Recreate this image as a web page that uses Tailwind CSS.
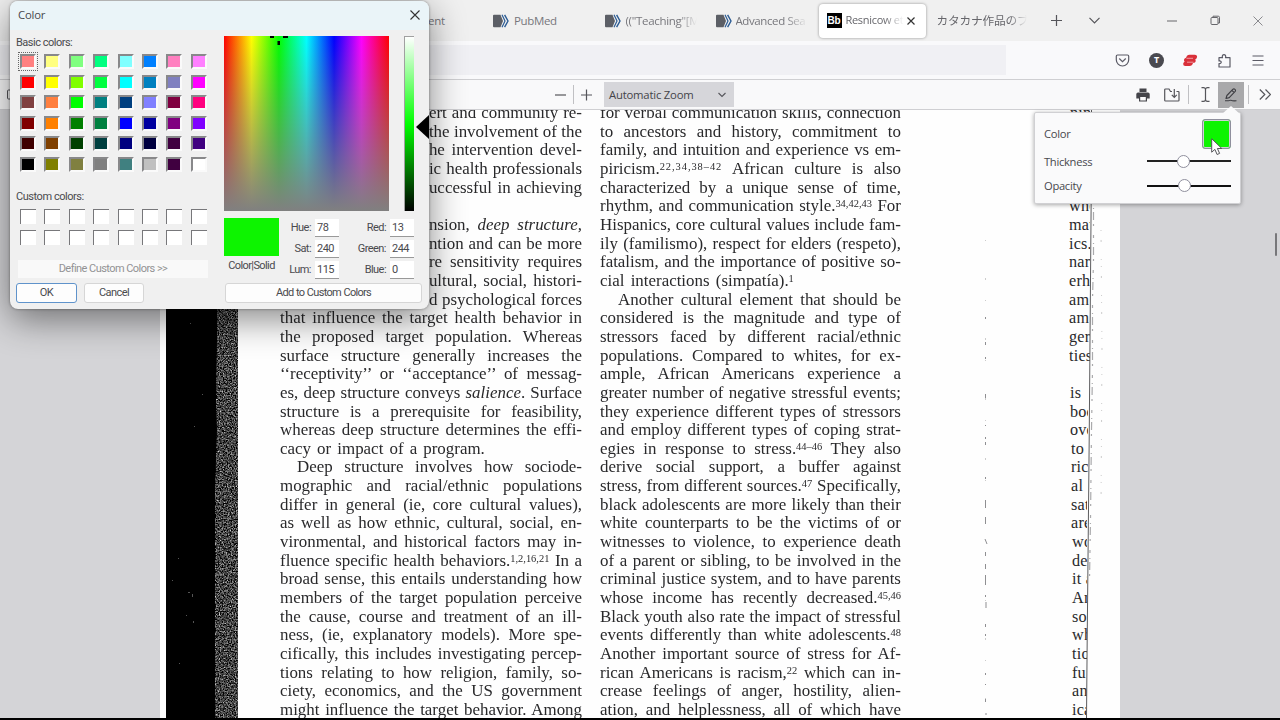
<!DOCTYPE html>
<html lang="en">
<head>
<meta charset="utf-8">
<title>PDF viewer with color picker</title>
<script src="https://cdn.jsdelivr.net/npm/@tailwindcss/browser@4"></script>
</head>
<body class="relative flex h-[720px] w-[1280px] flex-col overflow-hidden bg-black font-['Open_Sans','Noto_Sans_CJK_JP',sans-serif] text-[11.500px] tracking-[-0.200px] text-[#55555a]">

<!-- Tab strip -->
<header class="flex h-[41px] shrink-0 items-center bg-[#f0f0f0] pl-[428px]">
  <div class="w-[65px] text-[#77777c]">ent</div>
  <div class="flex w-[111.5px] items-center gap-[5px] text-[#77777c]">
    <svg class="h-[14px] w-[16px]" viewBox="0 0 16 14"><path d="M1 .8h6.500L10 7l-2.500 6.200H1a1 1 0 0 1-1-1V1.800a1 1 0 0 1 1-1z" fill="#5c5f66"/><path d="M9 .8 12 7 9 13.200" fill="none" stroke="#2c5c94" stroke-width="1.200"/><path d="M11.600.8 15 7l-3.400 6.200" fill="none" stroke="#2c5c94" stroke-width="1.400"/></svg>
    <span class="tracking-[-0.350px]">PubMed</span>
  </div>
  <div class="flex w-[111px] items-center gap-[5px] text-[#77777c]">
    <svg class="h-[14px] w-[16px]" viewBox="0 0 16 14"><path d="M1 .8h6.500L10 7l-2.500 6.200H1a1 1 0 0 1-1-1V1.800a1 1 0 0 1 1-1z" fill="#5c5f66"/><path d="M9 .8 12 7 9 13.200" fill="none" stroke="#2c5c94" stroke-width="1.200"/><path d="M11.600.8 15 7l-3.400 6.200" fill="none" stroke="#2c5c94" stroke-width="1.400"/></svg>
    <span class="w-[71px] overflow-hidden tracking-[-0.300px] whitespace-nowrap [mask-image:linear-gradient(90deg,#000_75%,transparent)]">(("Teaching"[M</span>
  </div>
  <div class="flex w-[103px] items-center gap-[4px] text-[#77777c]">
    <svg class="h-[14px] w-[16px]" viewBox="0 0 16 14"><path d="M1 .8h6.500L10 7l-2.500 6.200H1a1 1 0 0 1-1-1V1.800a1 1 0 0 1 1-1z" fill="#5c5f66"/><path d="M9 .8 12 7 9 13.200" fill="none" stroke="#2c5c94" stroke-width="1.200"/><path d="M11.600.8 15 7l-3.400 6.200" fill="none" stroke="#2c5c94" stroke-width="1.400"/></svg>
    <span class="w-[72px] overflow-hidden tracking-[-0.400px] whitespace-nowrap [mask-image:linear-gradient(90deg,#000_68%,transparent)]">Advanced Sea</span>
  </div>
  <div class="flex h-[34px] w-[107px] items-center rounded-[4px] bg-white pl-[8px] shadow-[0_0_3px_rgba(0,0,0,0.4)]">
    <span class="flex h-[15px] w-[15px] items-center justify-center bg-black font-['Liberation_Sans',sans-serif] text-[10px] font-bold text-white">Bb</span>
    <span class="ml-[4px] w-[58px] overflow-hidden text-[11px] tracking-[-0.300px] whitespace-nowrap text-[#66666b] [mask-image:linear-gradient(90deg,#000_65%,transparent)]">Resnicow et</span>
    <svg class="ml-[3px] size-[8px]" viewBox="0 0 8 8"><path d="m.5.5 7 7m0-7-7 7" stroke="#333" stroke-width="1.200"/></svg>
  </div>
  <div class="ml-[11px] w-[90px] overflow-hidden text-[11.700px] tracking-[-0.200px] whitespace-nowrap text-[#66666b] [mask-image:linear-gradient(90deg,#000_80%,transparent)]">カタカナ作品のブ</div>
  <svg class="ml-[24px] size-[11px]" viewBox="0 0 11 11"><path d="M5.500 0v11M0 5.500h11" stroke="#55555a" stroke-width="1.200"/></svg>
  <svg class="ml-[27px] h-[7px] w-[11px]" viewBox="0 0 11 7"><path d="m.5.8 5 5 5-5" fill="none" stroke="#55555a" stroke-width="1.200"/></svg>
  <svg class="ml-[67px] h-[10px] w-[10px]" viewBox="0 0 10 10"><path d="M0 5h10" stroke="#66666b"/></svg>
  <svg class="ml-[33px] size-[11px]" viewBox="0 0 11 11" fill="none" stroke="#66666b"><rect x="1" y="2.500" width="7" height="7" rx="1"/><path d="M3 2.500V1.200h5.300a1.200 1.200 0 0 1 1.200 1.200V8H8"/></svg>
  <svg class="ml-[32px] size-[10px]" viewBox="0 0 10 10"><path d="m.5.5 9 9m0-9-9 9" stroke="#8a8a8e"/></svg>
</header>

<!-- Address bar row -->
<nav class="flex h-[38px] shrink-0 items-center bg-[#f9f9fb]">
  <div class="h-[30px] w-[1006px] bg-[#f0f0f4]"></div>
  <svg class="ml-[109px] size-[15px]" viewBox="0 0 15 15" fill="none" stroke="#5b5b66" stroke-width="1.200"><path d="M2.500 2h10a1.200 1.200 0 0 1 1.200 1.200v3.600a6.200 6.200 0 0 1-12.400 0V3.200A1.200 1.200 0 0 1 2.500 2z"/><path d="m4.500 5.800 3 2.800 3-2.800" stroke-linecap="round"/></svg>
  <span class="ml-[19px] flex size-[15px] items-center justify-center rounded-full bg-[#4a4a50] text-[9px] font-bold text-white">T</span>
  <svg class="ml-[18px] h-[13px] w-[16px]" viewBox="0 0 16 13"><path d="M5 1.800Q6 .7 7.500.7h5.200Q15.500.9 15 3.300 14.500 5.200 13.200 5.400 14.200 6.500 13.400 8 12.600 9 11 9 10.300 12 7.500 12H3Q.8 11.700 1.200 9.500 1.500 8.200 2.600 7.700 1.500 6.500 2.200 5 3 4 4 3.800z" fill="#d9303a"/><path d="M4.500 4.300h6.500M5 8.200h6.500" stroke="#f3b6ba" stroke-width=".8"/></svg>
  <svg class="ml-[19px] size-[15px]" viewBox="0 0 15 15" fill="none" stroke="#5b5b66" stroke-width="1.200" stroke-linejoin="round"><path d="M2 14V10.500c2.800.7 3.200-3.200 0-2.500V4.700h3.500c-1.400-4.200 4.400-4.200 3 0h4.500V14z"/></svg>
  <svg class="ml-[20px] h-[11px] w-[12px]" viewBox="0 0 12 11"><path d="M.5 1h11M.5 5.500h11M.5 10h11" stroke="#5b5b66" stroke-width="1.200"/></svg>
</nav>

<!-- Viewer toolbar -->
<div class="relative flex h-[31px] shrink-0 items-center border-y border-[#cfcfd2] bg-[#f9f9fa] pl-[6px]">
  <svg class="h-[11px] w-[10px]" viewBox="0 0 10 11" fill="none" stroke="#55555a"><rect x="1.500" y="1" width="10" height="9" rx="1"/></svg>
  <svg class="ml-[539px] h-[12px] w-[11px]" viewBox="0 0 11 12"><path d="M0 6h11" stroke="#55555a" stroke-width="1.200"/></svg>
  <div class="mx-[7px] h-[19px] w-px bg-[#c0c0c3]"></div>
  <svg class="h-[12px] w-[11px]" viewBox="0 0 11 12"><path d="M0 6h11M5.500.5v11" stroke="#55555a" stroke-width="1.200"/></svg>
  <div class="ml-[12px] flex h-[25px] w-[130px] items-center justify-between bg-[#d6d6da] pt-px pr-[8px] pl-[5px] text-[11.300px] text-[#444449]">
    <span>Automatic Zoom</span>
    <svg class="h-[6px] w-[8px]" viewBox="0 0 8 6"><path d="m.5 1 3.500 3.500L7.500 1" fill="none" stroke="#55555a" stroke-width="1.100"/></svg>
  </div>
  <svg class="ml-[402px] size-[14px]" viewBox="0 0 14 14"><path d="M3.500.5h7V4h-7zM2 4.500h10A1.700 1.700 0 0 1 13.700 6v4.500H11V8.500H3v2H.3V6A1.700 1.700 0 0 1 2 4.500z" fill="#444449"/><path d="M3.600 8.500h6.800V13H3.600z" fill="#f9f9fa" stroke="#444449" stroke-width="1.200"/></svg>
  <svg class="ml-[14px] h-[14px] w-[16px]" viewBox="0 0 16 14" fill="none" stroke="#55555a" stroke-width="1.200"><path d="M8 3.500H6.500L5 1H1.500C1 1 .7 1.300.7 1.800v10.400c0 .5.300.8.800.8h12.700c.5 0 .8-.3.800-.8V4.300c0-.5-.3-.8-.8-.8h-1.700"/><path d="M10.300 1v8M7.800 6.800l2.500 2.500 2.500-2.500"/></svg>
  <div class="ml-[8px] h-[19px] w-px bg-[#c0c0c3]"></div>
  <svg class="ml-[12px] h-[15px] w-[9px]" viewBox="0 0 9 15"><path d="M.5.700h2C3.700.7 4.500 1.300 4.500 2.500v10c0 1.200-.8 1.800-2 1.800h-2M8.500.700h-2c-1.200 0-2 .6-2 1.800v10c0 1.200.8 1.800 2 1.800h2" fill="none" stroke="#55555a" stroke-width="1.200"/></svg>
  <div class="ml-[8px] flex h-[26px] w-[26px] items-center justify-center bg-[#a9a9ab]">
    <svg class="size-[14px]" viewBox="0 0 14 14" fill="none" stroke="#3d3d42" stroke-width="1.100" stroke-linejoin="round"><path d="M2 10.500 2.900 7.500 9 1.200c1.300-1 3.200.8 2.200 2.200L5.200 9.600zM7.900 2.300l2.200 2.200M1 12.800h3.500c1.500 0 1.500-1 2.500-.5s1.500.9 5.500.5"/></svg>
  </div>
  <div class="ml-[4px] h-[19px] w-px bg-[#c0c0c3]"></div>
  <svg class="ml-[10px] h-[11px] w-[12px]" viewBox="0 0 12 11"><path d="m.8.5 5 5-5 5M6.500.5l5 5-5 5" fill="none" stroke="#55555a" stroke-width="1.200"/></svg>
</div>

<!-- Document -->
<main class="relative flex h-[608px] shrink-0 overflow-hidden bg-[#d4d4d7] pl-[160px]">
  <article class="relative flex h-[608px] w-[960px] shrink-0 bg-[#fefefe] pl-[6px] font-['Liberation_Serif',serif] text-[16.200px] leading-[18.660px] tracking-normal text-[#29292b]">
    <svg class="h-[608px] w-[73px] shrink-0" viewBox="0 0 73 608">
      <filter id="grain" x="0" y="0" width="100%" height="100%" color-interpolation-filters="sRGB"><feTurbulence type="fractalNoise" baseFrequency=".75" numOctaves="2" seed="4"/><feColorMatrix values="1.100 1.100 0 0 -.84  1.100 1.100 0 0 -.84  1.100 1.100 0 0 -.84  0 0 0 0 1"/></filter>
      <path d="M0 0h72v608H0z" fill="#000"/>
      <path d="M50 0h22v608H49V500l1-70-1-60 2-90z" fill="#444" filter="url(#grain)"/>
      <path d="M0 0h52l-1 230-1 60 1 30-2 60v70l-1 158H0z" fill="#000"/>
      <g fill="#555"><path d="M24 213h1v1h-1zM36 284h1v1h-1zM28 316h1v1h-1zM12 448h1v1h-1zM22 482h2v1h-2zM26 484h1v3h-1zM20 505h1v1h-1zM27 511h1v2h-1zM6 470h1v1h-1zM13 553h1v1h-1z"/></g>
    </svg>

    <!-- Columns are set slightly expanded, as the journal's typeface is wider -->
    <section class="mt-[-6px] mr-[13px] ml-[41px] w-[289px] shrink-0 origin-top-left scale-x-[1.045] [&>p]:h-[18.660px] [&>p]:whitespace-nowrap [&>p]:[text-align-last:justify]">
      <p class="pl-[142.500px]">ert and community re-</p>
      <p class="pl-[142.500px]">the involvement of the</p>
      <p class="pl-[142.500px]">he intervention devel-</p>
      <p class="pl-[142.500px]">ic health professionals</p>
      <p class="pl-[142.500px]">uccessful in achieving</p>
      <p></p>
      <p class="pl-[142.500px]">nsion, <i>deep structure,</i></p>
      <p class="pl-[142.500px]">ntion and can be more</p>
      <p class="pl-[142.500px]">re sensitivity requires</p>
      <p class="pl-[142.500px]">ultural, social, histori-</p>
      <p class="pl-[142.500px]">d psychological forces</p>
      <p>that influence the target health behavior in</p>
      <p>the proposed target population. Whereas</p>
      <p>surface structure generally increases the</p>
      <p>‘‘receptivity’’ or ‘‘acceptance’’ of messag-</p>
      <p>es, deep structure conveys <i>salience</i>. Surface</p>
      <p>structure is a prerequisite for feasibility,</p>
      <p>whereas deep structure determines the effi-</p>
      <p class="w-[196px]">cacy or impact of a program.</p>
      <p class="pl-[16.300px]">Deep structure involves how sociode-</p>
      <p>mographic and racial/ethnic populations</p>
      <p>differ in general (ie, core cultural values),</p>
      <p>as well as how ethnic, cultural, social, en-</p>
      <p>vironmental, and historical factors may in-</p>
      <p>fluence specific health behaviors.<span class="relative -top-[4px] text-[10px]">1,2,16,21</span> In a</p>
      <p>broad sense, this entails understanding how</p>
      <p>members of the target population perceive</p>
      <p>the cause, course and treatment of an ill-</p>
      <p>ness, (ie, explanatory models). More spe-</p>
      <p>cifically, this includes investigating percep-</p>
      <p>tions relating to how religion, family, so-</p>
      <p>ciety, economics, and the US government</p>
      <p>might influence the target behavior. Among</p>
    </section>

    <section class="mt-[-6px] mr-[13px] ml-[18px] w-[288px] shrink-0 origin-top-left scale-x-[1.045] [&>p]:h-[18.660px] [&>p]:whitespace-nowrap [&>p]:[text-align-last:justify]">
      <p>for verbal communication skills, connection</p>
      <p>to ancestors and history, commitment to</p>
      <p>family, and intuition and experience vs em-</p>
      <p>piricism.<span class="relative -top-[4px] text-[10px] tracking-[0.900px]">22,34,38–42</span> African culture is also</p>
      <p>characterized by a unique sense of time,</p>
      <p>rhythm, and communication style.<span class="relative -top-[4px] text-[10px]">34,42,43</span> For</p>
      <p>Hispanics, core cultural values include fam-</p>
      <p>ily (familismo), respect for elders (respeto),</p>
      <p>fatalism, and the importance of positive so-</p>
      <p class="w-[185.500px]">cial interactions (simpatía).<span class="relative -top-[4px] text-[10px]">1</span></p>
      <p class="pl-[17.300px]">Another cultural element that should be</p>
      <p>considered is the magnitude and type of</p>
      <p>stressors faced by different racial/ethnic</p>
      <p>populations. Compared to whites, for ex-</p>
      <p>ample, African Americans experience a</p>
      <p>greater number of negative stressful events;</p>
      <p>they experience different types of stressors</p>
      <p>and employ different types of coping strat-</p>
      <p>egies in response to stress.<span class="relative -top-[4px] text-[10px]">44–46</span> They also</p>
      <p>derive social support, a buffer against</p>
      <p>stress, from different sources.<span class="relative -top-[4px] text-[10px]">47</span> Specifically,</p>
      <p>black adolescents are more likely than their</p>
      <p>white counterparts to be the victims of or</p>
      <p>witnesses to violence, to experience death</p>
      <p>of a parent or sibling, to be involved in the</p>
      <p>criminal justice system, and to have parents</p>
      <p>whose income has recently decreased.<span class="relative -top-[4px] text-[10px]">45,46</span></p>
      <p>Black youth also rate the impact of stressful</p>
      <p>events differently than white adolescents.<span class="relative -top-[4px] text-[10px]">48</span></p>
      <p>Another important source of stress for Af-</p>
      <p>rican Americans is racism,<span class="relative -top-[4px] text-[10px]">22</span> which can in-</p>
      <p>crease feelings of anger, hostility, alien-</p>
      <p>ation, and helplessness, all of which have</p>
    </section>

    <section class="mt-[-6px] ml-[168px] w-[21px] shrink-0 overflow-hidden tracking-[0.200px] [&>p]:h-[18.660px] [&>p]:whitespace-nowrap">
      <p class="pl-px">nin.</p><p></p><p></p><p></p><p></p>
      <p>who</p><p>mat</p><p>ics.</p><p>nar</p><p>erh</p><p>am</p><p>am</p><p>ger</p><p>ties</p><p></p>
      <p class="pl-[1px]">is</p><p class="w-[19px] overflow-hidden pl-[1px]">boo</p><p class="w-[19px] overflow-hidden pl-[1px]">ove</p><p class="pl-[2px]">to</p><p class="w-[19px] overflow-hidden pl-[2px]">ric</p><p class="pl-[2px]">al</p><p class="w-[18px] overflow-hidden pl-[2px]">sat</p><p class="w-[18px] overflow-hidden pl-[2px]">are</p><p class="w-[18px] overflow-hidden pl-[3px]">wo</p><p class="w-[19px] overflow-hidden pl-[3px]">de</p><p class="w-[18px] overflow-hidden pl-[3px]">it a</p><p class="w-[18px] overflow-hidden pl-[3px]">An</p><p class="w-[19px] overflow-hidden pl-[3px]">so</p><p class="w-[18px] overflow-hidden pl-[3px]">wh</p><p class="w-[18px] overflow-hidden pl-[3px]">tio</p><p class="w-[17px] overflow-hidden pl-[3px]">fun</p><p class="w-[18px] overflow-hidden pl-[3px]">an</p><p class="w-[17px] overflow-hidden pl-[3px]">ica</p>
    </section>

    <!-- Scan edge line and specks -->
    <svg class="absolute top-0 left-[820px] h-[608px] w-[140px]" viewBox="0 0 140 608" fill="none">
      <path d="M111.500 0v50l-.5 60-1 120-.8 100-1 100-1 100-.7 78" stroke="#5c5c5e" stroke-width="1"/>
      <path d="M113.500 90v60l-1 40v70l-1 60-1 90-1 60" stroke="#aaaaac" stroke-width="1.200" stroke-dasharray="3 5 1 3 8 4 2 9"/>
      <path d="M121 120l1 120-1 160" stroke="#ccc" stroke-dasharray="1 9 2 17 1 6"/>
      <path d="M5.500 130v480" stroke="#ccc" stroke-dasharray="1 37 2 20"/>
      <path d="M5.500 207v2M5.500 232v3M5.500 247v2M5.500 284v4M5.500 315v1M5.500 327v2M5.500 332v3M5.500 367v2M5.500 390v8M5.500 407v7M5 429l2 5M5.500 442v4M5.500 454v5M5.500 465v10M5.500 485v2M6 492v6M5.500 514v3M5.500 524v2M5.500 563v2M5.500 574v1M5.500 589v3M6 603v2" stroke="#8f8f92"/>
    </svg>
  </article>
  <div class="mt-[123px] ml-[154.500px] h-[23px] w-[2px] rounded-full bg-[#77777a]"></div>
</main>

<!-- Draw tool options -->
<div class="absolute top-[112px] left-[1034px] flex h-[92px] w-[207px] flex-col rounded-[2px] border border-[#d0d0d3] bg-[#fafafb] pr-[9px] pl-[9px] text-[11.200px] tracking-[-0.300px] text-[#48484d] shadow-[0_1px_4px_rgba(0,0,0,0.350)]">
  <svg class="absolute -top-[7px] right-[0px] h-[8px] w-[18px]" viewBox="0 0 18 8"><path d="M0 8 9 0l9 8z" fill="#fafafb"/></svg>
  <div class="mt-[5px] flex h-[31px] items-center justify-between"><span class="pt-[2px]">Color</span><span class="h-[30px] w-[29px] rounded-[3px] border border-[#8f8f9d] bg-[#0df400] shadow-[inset_0_0_0_1px_#d0d0d7]"></span></div>
  <label class="flex h-[24px] items-center justify-between"><span class="pt-[2px]">Thickness</span><span class="relative flex h-[2px] w-[84px] items-center bg-[#222]"><i class="ml-[30px] size-[13px] rounded-full border border-[#8f8f9d] bg-white"></i></span></label>
  <label class="flex h-[25px] items-center justify-between"><span class="pt-[2px]">Opacity</span><span class="relative flex h-[2px] w-[84px] items-center bg-[#111]"><i class="ml-[31px] size-[13px] rounded-full border border-[#8f8f9d] bg-white"></i></span></label>
</div>
<svg class="absolute top-[138px] left-[1211px] h-[18px] w-[13px]" viewBox="0 0 13 18"><path d="M.7.700v13.500l3.200-2.800 2.200 5.100 2.500-1.100-2.200-4.900h4.400z" fill="#fff" stroke="#55555a"/></svg>

<!-- Color dialog -->
<div class="absolute top-px left-[10px] flex h-[308px] w-[419px] flex-col overflow-visible rounded-[8px] bg-[#f0f0f0] shadow-[0_10px_36px_rgba(0,0,0,0.480),0_0_3px_rgba(0,0,0,0.400)]">
  <div class="flex h-[29px] shrink-0 items-center justify-between rounded-t-[8px] bg-[#eaf4f8] pr-[9px] pb-[2px] pl-[8px] text-[11.300px] text-[#48484d]"><span class="pt-px">Color</span><svg class="size-[10px]" viewBox="0 0 10 10"><path d="m.5.5 9 9m0-9-9 9" stroke="#333" stroke-width="1.100"/></svg></div>
  <div class="flex font-['Roboto',sans-serif] text-[11px] tracking-[-0.550px] text-[#4a4a4e]">
    <div class="w-[214px] shrink-0 pl-[6px]">
      <div class="mt-[5px] h-[16px] tracking-[-0.500px] leading-[16px]">Basic colors:</div>
      <div class="mt-[3px] ml-[4px] grid grid-cols-[repeat(8,16px)] gap-x-[8.400px] gap-y-[5.500px] [&>i]:h-[15px] [&>i]:border-2 [&>i]:border-t-[#88888a] [&>i]:border-r-[#fafafa] [&>i]:border-b-[#fafafa] [&>i]:border-l-[#88888a]">
        <i class="bg-[#ff8080] outline outline-[#666] outline-dotted outline-offset-1"></i><i class="bg-[#ffff80]"></i><i class="bg-[#80ff80]"></i><i class="bg-[#00ff80]"></i><i class="bg-[#80ffff]"></i><i class="bg-[#0080ff]"></i><i class="bg-[#ff80c0]"></i><i class="bg-[#ff80ff]"></i>
        <i class="bg-[#ff0000]"></i><i class="bg-[#ffff00]"></i><i class="bg-[#80ff00]"></i><i class="bg-[#00ff40]"></i><i class="bg-[#00ffff]"></i><i class="bg-[#0080c0]"></i><i class="bg-[#8080c0]"></i><i class="bg-[#ff00ff]"></i>
        <i class="bg-[#804040]"></i><i class="bg-[#ff8040]"></i><i class="bg-[#00ff00]"></i><i class="bg-[#008080]"></i><i class="bg-[#004080]"></i><i class="bg-[#8080ff]"></i><i class="bg-[#800040]"></i><i class="bg-[#ff0080]"></i>
        <i class="bg-[#800000]"></i><i class="bg-[#ff8000]"></i><i class="bg-[#008000]"></i><i class="bg-[#008040]"></i><i class="bg-[#0000ff]"></i><i class="bg-[#0000a0]"></i><i class="bg-[#800080]"></i><i class="bg-[#8000ff]"></i>
        <i class="bg-[#400000]"></i><i class="bg-[#804000]"></i><i class="bg-[#004000]"></i><i class="bg-[#004040]"></i><i class="bg-[#000080]"></i><i class="bg-[#000040]"></i><i class="bg-[#400040]"></i><i class="bg-[#400080]"></i>
        <i class="bg-[#000000]"></i><i class="bg-[#808000]"></i><i class="bg-[#808040]"></i><i class="bg-[#808080]"></i><i class="bg-[#408080]"></i><i class="bg-[#c0c0c0]"></i><i class="bg-[#400040]"></i><i class="bg-[#ffffff]"></i>
      </div>
      <div class="mt-[17.500px] h-[16px] tracking-[-0.450px] leading-[16px]">Custom colors:</div>
      <div class="mt-[4px] ml-[4px] grid grid-cols-[repeat(8,16px)] gap-x-[8.400px] gap-y-[5.500px] [&>i]:h-[15px] [&>i]:border-t-[1.500px] [&>i]:border-l-[1.500px] [&>i]:border-[#77777a] [&>i]:bg-white">
        <i></i><i></i><i></i><i></i><i></i><i></i><i></i><i></i><i></i><i></i><i></i><i></i><i></i><i></i><i></i><i></i>
      </div>
      <div class="mt-[15.300px] ml-[2px] flex h-[18px] w-[190px] items-center justify-center bg-[#f9f9f9] pt-px text-[#929294]">Define Custom Colors &gt;&gt;</div>
      <div class="mt-[5px] flex gap-[7px]">
        <div class="flex h-[20px] w-[61px] items-center justify-center rounded-[3px] border border-[#5f93cb] bg-[#fdfdfd] pt-px">OK</div>
        <div class="flex h-[20px] w-[60px] items-center justify-center rounded-[3px] border border-[#d6d6d6] bg-[#fdfdfd] pt-px">Cancel</div>
      </div>
    </div>
    <div class="w-[205px] shrink-0 pt-[6px]">
      <div class="flex">
        <div class="relative h-[175px] w-[165px] bg-[linear-gradient(to_bottom,rgba(128,128,128,0),rgb(128,128,128)),linear-gradient(to_right,#f00,#ff0_16.700%,#0f0_33.300%,#0ff_50%,#00f_66.700%,#f0f_83.300%,#f00)]">
          <svg class="absolute top-0 left-[45px] h-[10px] w-[20px]" viewBox="0 0 20 10"><path d="M1 0h4v2H1zM14 0h5v2h-5zM8.500 5h2.500v4H8.500z" fill="#000"/></svg>
        </div>
        <div class="ml-[15px] h-[175px] w-[10px] border-t border-l border-[#a0a0a0] bg-[linear-gradient(to_bottom,#fff,#0f0_50%,#000)]"></div>
        <svg class="mt-[79px] ml-[2px] h-[24px] w-[13px]" viewBox="0 0 13 24"><path d="M0 12 13 0v24z" fill="#000"/></svg>
      </div>
      <div class="mt-[7px] flex">
        <div class="w-[55px]"><div class="h-[38px] bg-[#0df400]"></div><div class="mt-[2px] text-center tracking-[-0.600px] whitespace-nowrap">Color|Solid</div></div>
        <div class="ml-[7px] grid grid-cols-[29px_24px_51px_24px] items-center gap-y-[3px] pt-px [&>b]:h-[18px] [&>b]:border-b [&>b]:border-[#999] [&>b]:bg-white [&>b]:pl-[2px] [&>b]:leading-[18px] [&>b]:font-normal [&>span]:pt-px [&>span]:pr-[4px] [&>span]:text-right">
          <span>Hue:</span><b>78</b><span>Red:</span><b>13</b>
          <span>Sat:</span><b>240</b><span>Green:</span><b>244</b>
          <span>Lum:</span><b>115</b><span>Blue:</span><b>0</b>
        </div>
      </div>
      <div class="mt-[3.500px] ml-[1px] flex h-[20px] w-[197px] items-center justify-center rounded-[3px] border border-[#d6d6d6] bg-[#fdfdfd] pt-[2px] tracking-[-0.700px] [word-spacing:0.500px]">Add to Custom Colors</div>
    </div>
  </div>
</div>
</body>
</html>
